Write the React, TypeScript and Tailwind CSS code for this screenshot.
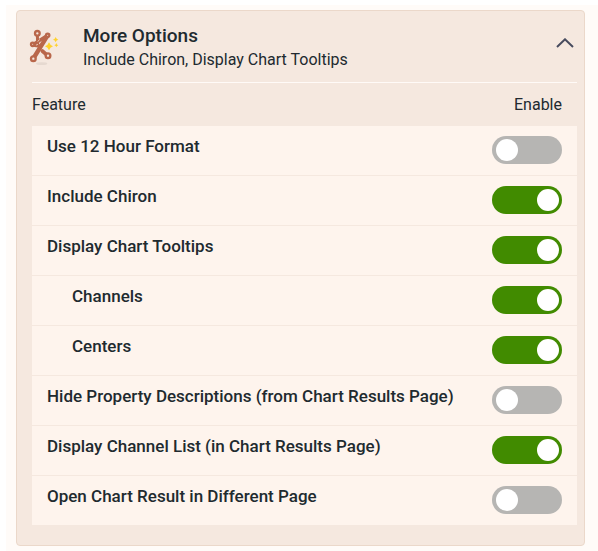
import { useState } from "react"

type Feature = {
    id: string
    label: string
    enabled: boolean
    nested?: boolean
}

const initialFeatures: Feature[] = [
    { id: "hour-format", label: "Use 12 Hour Format", enabled: false },
    { id: "chiron", label: "Include Chiron", enabled: true },
    { id: "tooltips", label: "Display Chart Tooltips", enabled: true },
    { id: "channels", label: "Channels", enabled: true, nested: true },
    { id: "centers", label: "Centers", enabled: true, nested: true },
    { id: "hide-descriptions", label: "Hide Property Descriptions (from Chart Results Page)", enabled: false },
    { id: "channel-list", label: "Display Channel List (in Chart Results Page)", enabled: true },
    { id: "different-page", label: "Open Chart Result in Different Page", enabled: false },
]

const ChironIcon = () => (
    <svg className="h-10 w-8 shrink-0" viewBox="24 18 96 120" fill="none" aria-hidden="true">
        <ellipse cx="65" cy="125" rx="17" ry="4" fill="#e6d9d0" />
        <g stroke="#b9674b" strokeLinecap="round">
            <path d="M41 108 L81 43" strokeWidth="13" />
            <path d="M40 67 L81 41" strokeWidth="10" />
            <path d="M52 36 L53 66" strokeWidth="9" />
            <path d="M40 69 L59 72" strokeWidth="10" />
            <path d="M67 87 L82 100" strokeWidth="11" />
            <g fill="#f5e8df" strokeWidth="7">
                <circle cx="52" cy="34" r="7" />
                <circle cx="83" cy="40" r="5" />
                <circle cx="38" cy="67" r="5" />
                <circle cx="40" cy="110" r="7" />
                <circle cx="84" cy="101" r="7" />
            </g>
            <path d="M54 58 L58 53" stroke="#e3c2b2" strokeWidth="3" />
            <path d="M49 69 L53 67" stroke="#e3c2b2" strokeWidth="3" />
        </g>
        <g fill="#ffd22e">
            <path d="M87 61 Q90 70 99 73 Q90 76 87 85 Q84 76 75 73 Q84 70 87 61Z" />
            <path d="M107 45 Q109 52 115 53 Q109 54 107 61 Q105 54 99 53 Q105 52 107 45Z" />
            <path d="M109 63 Q110 69 115 70 Q110 71 109 76 Q108 71 103 70 Q108 69 109 63Z" />
        </g>
    </svg>
)

const App = () => {
    const [features, setFeatures] = useState<Feature[]>(initialFeatures)
    const [isOpen, setIsOpen] = useState<boolean>(true)

    const toggleFeature = (id: string) => {
        setFeatures(features.map((item) => (item.id === id ? { ...item, enabled: !item.enabled } : item)))
    }

    return (
        <main className="min-h-screen bg-white pt-[5px] pl-1.5 font-[Roboto,sans-serif] text-base text-[#212a2f]">
            <div className="bg-[#fffbf8] pt-[5px] pr-[13px] pb-[5px] pl-2.5">
                <section className="rounded border border-[#ebd8ca] bg-[#f5e8df] pr-[7px] pb-[19px]">
                    <button
                        type="button"
                        className="flex w-full items-start pt-[13px] pr-[3px] pb-2.5 pl-[11px] text-left"
                        aria-expanded={isOpen}
                        onClick={() => setIsOpen(!isOpen)}
                    >
                        <span className="pt-1">
                            <ChironIcon />
                        </span>
                        <span className="ml-[23px] flex-1">
                            <span className="block text-[19px] leading-6 font-medium">More Options</span>
                            <span className="block leading-6">Include Chiron, Display Chart Tooltips</span>
                        </span>
                        <svg
                            className={isOpen ? "mt-[14px] h-2.5 w-[18px]" : "mt-[14px] h-2.5 w-[18px] rotate-180"}
                            viewBox="0 0 18 10"
                            fill="none"
                            stroke="#474b5e"
                            strokeWidth="2"
                            aria-hidden="true"
                        >
                            <path d="M1 9 L9 1.3 L17 9" />
                        </svg>
                    </button>

                    {isOpen && (
                        <div className="ml-[15px] border-t border-[#fffaf7]">
                            <table className="w-full border-separate border-spacing-0">
                                <thead>
                                    <tr className="h-[43px]">
                                        <th className="text-left font-normal">Feature</th>
                                        <th className="pr-[15px] text-right font-normal">Enable</th>
                                    </tr>
                                </thead>
                                <tbody className="bg-[#fef4ed]">
                                    {features.map((feature) => (
                                        <tr key={feature.id} className="h-[50px] *:border-b *:border-[#f5e8df] *:align-top">
                                            <td className={feature.nested ? "pt-2 pl-10" : "pt-2 pl-[15px]"}>
                                                <label htmlFor={feature.id} className="block text-[17px] leading-6 font-medium">
                                                    {feature.label}
                                                </label>
                                            </td>
                                            <td className="w-[85px] pt-2.5 pr-[15px]">
                                                <input
                                                    id={feature.id}
                                                    type="checkbox"
                                                    role="switch"
                                                    checked={feature.enabled}
                                                    onChange={() => toggleFeature(feature.id)}
                                                    className="flex h-7 w-[70px] cursor-pointer appearance-none items-center rounded-full bg-[#b6b5b3] px-1 before:size-[22px] before:rounded-full before:bg-white checked:justify-end checked:bg-[#418b00] checked:px-[3px]"
                                                />
                                            </td>
                                        </tr>
                                    ))}
                                </tbody>
                            </table>
                        </div>
                    )}
                </section>
            </div>
        </main>
    )
}

export default App
